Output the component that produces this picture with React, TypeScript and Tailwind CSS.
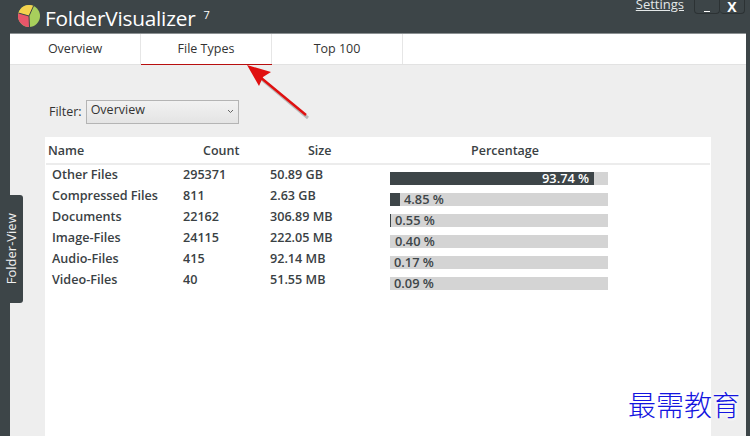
const rows = [
  { name: "Other Files", count: "295371", size: "50.89 GB", pct: "93.74 %", fill: 204, pad: 152, light: true },
  { name: "Compressed Files", count: "811", size: "2.63 GB", pct: "4.85 %", fill: 10, pad: 14 },
  { name: "Documents", count: "22162", size: "306.89 MB", pct: "0.55 %", fill: 1, pad: 5 },
  { name: "Image-Files", count: "24115", size: "222.05 MB", pct: "0.40 %", fill: 0, pad: 5 },
  { name: "Audio-Files", count: "415", size: "92.14 MB", pct: "0.17 %", fill: 0, pad: 4 },
  { name: "Video-Files", count: "40", size: "51.55 MB", pct: "0.09 %", fill: 0, pad: 4 },
];

const font = "font-['Open_Sans','Noto_Sans',sans-serif]";

export default function App() {
  return (
    <div className={`relative flex h-[436px] w-[750px] flex-col overflow-hidden bg-[#3d4548] ${font}`}>
      {/* Title bar */}
      <header className="flex h-[33px] shrink-0 items-start">
        <svg className="ml-[18px] mt-[5px]" width="22" height="22" viewBox="0 0 22 22">
          <circle cx="11" cy="11" r="11" fill="#a8cf5c" />
          <path d="M11 11 L0.4 8 A11 11 0 0 1 15.5 1 Z" fill="#f4d24e" />
          <path d="M11 11 L0.4 8 A11 11 0 0 0 11.5 22 Z" fill="#e8566a" />
          <path d="M0.4 8 L11 11 L11.5 22 M11 11 L15.5 1" stroke="#3d4548" strokeWidth="1" fill="none" />
        </svg>
        <span className="ml-[5px] mt-[4px] text-[20.8px] leading-[28px] tracking-[-0.2px] text-white">FolderVisualizer</span>
        <span className="ml-[8px] mt-[7px] text-[11px] leading-[16px] text-white">7</span>
        <div className="ml-auto mr-[5px] flex h-[14px] items-start">
          <a className="-mt-[5px] mr-[10px] text-[13px] leading-[18px] text-[#e4e8e8] underline">Settings</a>
          <div className="flex h-[14px] w-[26px] items-end justify-center rounded-b-sm border border-t-0 border-[#2c3234] pb-[1px]">
            <div className="h-[1px] w-[6px] bg-white" />
          </div>
          <div className="flex h-[14px] w-[25px] items-center justify-center rounded-b-sm border border-t-0 border-l-0 border-[#2c3234] text-[14px] font-bold leading-[12px] text-white">
            X
          </div>
        </div>
      </header>

      {/* Main window */}
      <main className="ml-[10px] mr-[4px] flex min-h-0 flex-1 flex-col border-t border-[#8b9092] bg-[#eeeeee]">
        <nav className="flex h-[31px] shrink-0 border-b border-[#e2e2e2] bg-white text-[12.5px] text-[#333]">
          <div className="flex w-[131px] items-center justify-center border-r border-[#e6e6e6]">Overview</div>
          <div className="flex w-[131px] items-center justify-center border-r border-r-[#e6e6e6] shadow-[0_1px_0_#b80f0f]">File Types</div>
          <div className="flex w-[131px] items-center justify-center border-r border-[#e6e6e6]">Top 100</div>
        </nav>

        <div className="ml-[39px] mt-[35px] flex h-[24px] shrink-0 items-center">
          <span className="mt-[1px] text-[12.5px] text-[#333]">Filter:</span>
          <div className="ml-[4px] flex h-[24px] w-[153px] items-start justify-between border border-[#b4b4b4] bg-gradient-to-b from-[#f2f2f2] to-[#e4e4e4] pl-[4px] pr-[4px] text-[12.5px] leading-[18px] text-[#333]">
            Overview
            <svg className="mt-[8px]" width="7" height="5" viewBox="0 0 7 5">
              <path d="M1 1 L3.5 3.5 L6 1" fill="none" stroke="#666" strokeWidth="1" />
            </svg>
          </div>
        </div>

        {/* Table */}
        <section className="ml-[35px] mt-[13px] min-h-0 w-[666px] flex-1 bg-white pt-[3px] text-[12.6px] font-semibold text-[#3a4144]">
          <div className="mx-px grid h-[25px] grid-cols-[157px_105px_163px_1fr] items-center border-b-2 border-[#ececec] text-[12.5px]">
            <span className="pl-[2px]">Name</span>
            <span>Count</span>
            <span>Size</span>
            <span>Percentage</span>
          </div>
          <div>
            {rows.map((r) => (
              <div key={r.name} className="grid h-[21px] grid-cols-[131px_87px_120px_218px] items-center pl-[7px]">
                <span>{r.name}</span>
                <span>{r.count}</span>
                <span>{r.size}</span>
                <div className="relative mt-[5px] h-[13px] bg-[#d4d4d4]">
                  <div className="absolute inset-y-0 left-0 bg-[#3d4548]" style={{ width: r.fill }} />
                  <div
                    className={`relative text-[12.8px] leading-[12px] ${r.light ? "text-white" : "text-[#3d4548]"}`}
                    style={{ paddingLeft: r.pad }}
                  >
                    {r.pct}
                  </div>
                </div>
              </div>
            ))}
          </div>
        </section>
      </main>

      {/* Side tab */}
      <div className="absolute left-0 top-[195px] flex h-[108px] w-[23px] items-center justify-center rounded-r-[3px] bg-[#3d4548]">
        <span className="-rotate-90 whitespace-nowrap text-[13px] text-[#f0f0f0]">Folder-View</span>
      </div>

      {/* Annotation arrow */}
      <svg className="absolute left-[240px] top-[60px]" width="75" height="65" viewBox="0 0 75 65">
        <path d="M67 56 L18 15" stroke="#555" strokeOpacity="0.35" strokeWidth="3" transform="translate(1 2)" />
        <path d="M66 55 L20 17" stroke="#e01010" strokeWidth="2.4" fill="none" />
        <path d="M7 5 L31 12 L23 17 L19 26 Z" fill="#e01010" />
      </svg>

      {/* Watermark */}
      <div className="absolute left-[628px] top-[385px] font-['Noto_Sans_CJK_SC',sans-serif] text-[28px] font-light leading-[38px] text-[#1414e0] [text-shadow:0_0_4px_#fff,0_0_4px_#fff,0_0_4px_#fff]">
        最需教育
      </div>
    </div>
  );
}
